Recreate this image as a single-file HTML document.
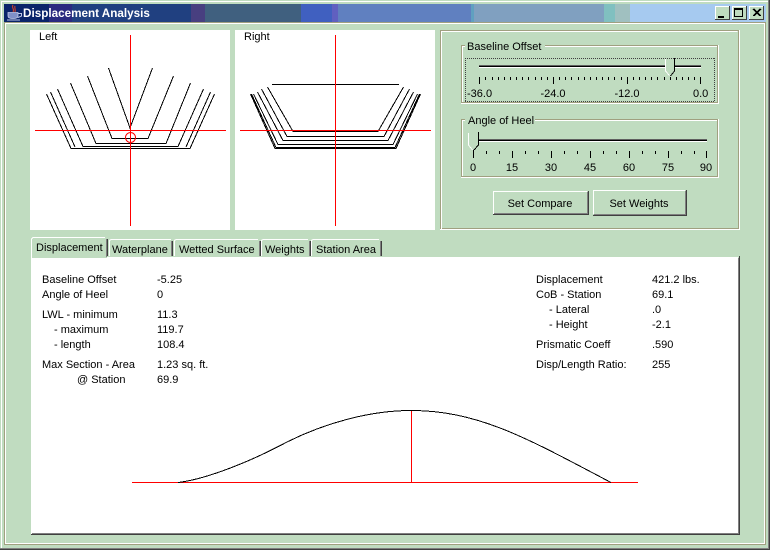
<!DOCTYPE html>
<html><head><meta charset="utf-8"><style>
html,body{margin:0;padding:0;width:770px;height:550px;overflow:hidden;background:#c0dcc0}
svg{display:block}
text{font-family:"Liberation Sans",sans-serif;font-size:11px;fill:#000}
.c{shape-rendering:crispEdges}
</style></head><body>
<svg width="770" height="550" viewBox="0 0 770 550" xmlns="http://www.w3.org/2000/svg">
<g class="c">
<rect width="770" height="550" fill="#c0dcc0"/>
<!-- window frame -->
<rect x="1" y="1" width="767" height="1" fill="#fff"/>
<rect x="1" y="1" width="1" height="547" fill="#fff"/>
<rect x="768" y="0" width="1" height="549" fill="#808080"/>
<rect x="769" y="0" width="1" height="550" fill="#404040"/>
<rect x="0" y="548" width="769" height="1" fill="#808080"/>
<rect x="0" y="549" width="770" height="1" fill="#404040"/>
<!-- title bar -->
<rect x="4" y="4" width="45" height="18" fill="#0a246a"/>
<rect x="49" y="4" width="23" height="18" fill="#2a2a80"/>
<rect x="72" y="4" width="60" height="18" fill="#1f3f80"/>
<rect x="132" y="4" width="59" height="18" fill="#204080"/>
<rect x="191" y="4" width="14" height="18" fill="#483f80"/>
<rect x="205" y="4" width="96" height="18" fill="#40607f"/>
<rect x="301" y="4" width="31" height="18" fill="#4060c0"/>
<rect x="332" y="4" width="6" height="18" fill="#6060c0"/>
<rect x="338" y="4" width="133" height="18" fill="#6080c0"/>
<rect x="471" y="4" width="3" height="18" fill="#60a0c0"/>
<rect x="474" y="4" width="130" height="18" fill="#80a0c0"/>
<rect x="604" y="4" width="11" height="18" fill="#80c0c0"/>
<rect x="615" y="4" width="15" height="18" fill="#a0c0c0"/>
<rect x="630" y="4" width="136" height="18" fill="#a6caf0"/>
<!-- inner frame -->
<rect x="4" y="22" width="762" height="1" fill="#a0a080"/>
<rect x="4" y="23" width="762" height="1" fill="#fff"/>
<rect x="4" y="22" width="1" height="523" fill="#a0a080"/>
<rect x="5" y="23" width="1" height="521" fill="#fff"/>
<rect x="764" y="24" width="1" height="520" fill="#fff"/>
<rect x="765" y="22" width="1" height="523" fill="#a0a080"/>
<rect x="5" y="543" width="760" height="1" fill="#fff"/>
<rect x="4" y="544" width="762" height="1" fill="#a0a080"/>
<!-- window buttons -->
<rect x="715" y="6" width="15" height="14" fill="#c0dcc0"/><path d="M715 6.5H729.5M715.5 6V20" stroke="#fff"/><path d="M715 19.5H730M729.5 6V20" stroke="#404040"/><rect x="718" y="16" width="6" height="2" fill="#000"/>
<rect x="732" y="6" width="15" height="14" fill="#c0dcc0"/><path d="M732 6.5H746.5M732.5 6V20" stroke="#fff"/><path d="M732 19.5H747M746.5 6V20" stroke="#404040"/><rect x="734.5" y="8.5" width="8" height="8" fill="none" stroke="#000"/><rect x="734" y="8" width="9" height="2" fill="#000"/>
<rect x="749" y="6" width="15" height="14" fill="#c0dcc0"/><path d="M749 6.5H763.5M749.5 6V20" stroke="#fff"/><path d="M749 19.5H764M763.5 6V20" stroke="#404040"/>
<path d="M753 9L760 16M754 9L761 16M760 9L753 16M761 9L754 16" stroke="#000" fill="none"/>
</g>
<!-- icon -->
<g>
<path d="M13 5C11 8 15 9 13 12M15 6C14 8 16 9 15 12" stroke="#c04030" stroke-width="1.2" fill="none"/>
<path d="M8 12.5H18V16C18 17.5 16 18.5 13 18.5C10 18.5 8 17.5 8 16Z" fill="#8090c8" stroke="#c0c8e8" stroke-width=".8"/>
<path d="M18 13.5H21.5V16L18 17.5" fill="none" stroke="#c0c8e8" stroke-width="1"/>
<path d="M7 20H20" stroke="#c0c8e8" stroke-width="1"/>
</g>
<text x="23" y="17" style="font-size:11.7px;font-weight:bold;fill:#fff">Displacement Analysis</text>

<!-- plots -->
<g class="c">
<rect x="30" y="30" width="200" height="200" fill="#fff"/>
<rect x="235" y="30" width="200" height="200" fill="#fff"/>
<g fill="none" stroke="#000">
<path d="M46.5 94L71 148.5H190L214.5 94"/>
<path d="M50.5 92L75 147M210.5 92L186 147"/>
<path d="M57.5 89L83 146.5H178L203.5 89"/>
<path d="M70.5 83L96 143.5H166L190.5 83"/>
<path d="M87.5 76L112 138.5H148L173.5 76"/>
<path d="M108.5 68L130 128L152.5 68"/>
<path d="M272 84.5H399"/>
<path d="M250.5 94L275 148.5H396L420.5 94"/>
<path d="M251.5 94L276 147.5H395L419.5 94"/>
<path d="M253.5 94L278 144.5H393L417.5 94"/>
<path d="M257.5 92L283 140.5H388L413.5 92"/>
<path d="M261.5 89L287 136.5H384L409.5 89"/>
<path d="M267.5 87L293 131.5H378L403.5 87"/>
<path d="M293 130.5H378"/>
</g>
<g fill="none" stroke="#f00">
<path d="M130.5 35V226M35 130.5H226"/>
<path d="M335.5 35V226M240 130.5H431"/>
</g>
</g>
<circle cx="130.5" cy="137.5" r="5" fill="none" stroke="#f00"/>
<text x="39" y="40">Left</text>
<text x="244" y="40">Right</text>

<!-- controls panel -->
<g class="c" fill="none">
<path d="M440.5 30.5H738.5V228.5H440.5Z" stroke="#a0a080"/>
<path d="M441.5 229V31.5H737.5" stroke="#fff"/>
<path d="M739.5 30V229.5H440" stroke="#fff"/>
<path d="M462 45.5H717.5V102.5H461.5V45" stroke="#a0a080"/>
<path d="M462 46.5H717M718.5 45V103.5H461M462.5 46V102" stroke="#fff"/>
<path d="M462 119.5H717.5V176.5H461.5V119" stroke="#a0a080"/>
<path d="M462 120.5H717M718.5 119V177.5H461M462.5 120V176" stroke="#fff"/>
<path d="M465 58.5H715M465 101.5H715M465.5 58V102M714.5 58V102" stroke="#404040" stroke-dasharray="1 1"/>
</g>
<g class="c">
<rect x="465" y="42" width="80" height="8" fill="#c0dcc0"/>
<rect x="465" y="116" width="70" height="8" fill="#c0dcc0"/>
<!-- baseline slider -->
<rect x="479" y="65" width="222" height="1" fill="#606060"/>
<rect x="479" y="66" width="222" height="1" fill="#000"/>
<rect x="479" y="67" width="222" height="1" fill="#fff"/>
<path d="M665.5 59H674.5V71L670 76L665.5 71Z" fill="#c0dcc0"/>
<path d="M665.5 59V71L669.5 75.5" fill="none" stroke="#fff"/>
<path d="M674.5 58V71L670.5 76" fill="none" stroke="#000"/>
<path fill="none" stroke="#000" d="M485.5 77V80M492.5 77V80M498.5 77V80M504.5 77V80M510.5 77V80M516.5 77V80M522.5 77V80M528.5 77V80M535.5 77V80M541.5 77V80M547.5 77V80M559.5 77V80M565.5 77V80M571.5 77V80M578.5 77V80M584.5 77V80M590.5 77V80M596.5 77V80M602.5 77V80M608.5 77V80M614.5 77V80M621.5 77V80M633.5 77V80M639.5 77V80M645.5 77V80M651.5 77V80M657.5 77V80M664.5 77V80M670.5 77V80M676.5 77V80M682.5 77V80M688.5 77V80M694.5 77V80M479.5 77V84M553.5 77V84M627.5 77V84M700.5 77V84"/>
<!-- heel slider -->
<rect x="478" y="139" width="229" height="1" fill="#606060"/>
<rect x="478" y="140" width="229" height="1" fill="#000"/>
<rect x="478" y="141" width="229" height="1" fill="#fff"/>
<path d="M468.5 133H477.5V145L473 150L468.5 145Z" fill="#c0dcc0"/>
<path d="M468.5 133V145L472.5 150" fill="none" stroke="#fff"/>
<path d="M478.5 132V145L474 150" fill="none" stroke="#000"/>
<path fill="none" stroke="#000" d="M486.5 151V154M499.5 151V154M525.5 151V154M538.5 151V154M564.5 151V154M577.5 151V154M603.5 151V154M616.5 151V154M642.5 151V154M655.5 151V154M681.5 151V154M694.5 151V154M473.5 150V158M512.5 151V158M551.5 151V158M590.5 151V158M629.5 151V158M668.5 151V158M706.5 151V158"/>
<!-- buttons -->
<path d="M493.5 214V191.5H587" fill="none" stroke="#fff"/>
<path d="M494 213.5H587.5V192" fill="none" stroke="#808080"/>
<path d="M493 214.5H588.5V191" fill="none" stroke="#404040"/>
<path d="M593.5 214V190.5H685" fill="none" stroke="#fff"/>
<path d="M594 214.5H685.5V191" fill="none" stroke="#808080"/>
<path d="M593 215.5H686.5V190" fill="none" stroke="#404040"/>
</g>
<text x="467" y="50">Baseline Offset</text>
<text x="468" y="124">Angle of Heel</text>
<text x="467" y="97">-36.0</text>
<text x="553" y="97" text-anchor="middle">-24.0</text>
<text x="627" y="97" text-anchor="middle">-12.0</text>
<text x="693" y="97">0.0</text>
<g text-anchor="middle">
<text x="473" y="171">0</text><text x="512" y="171">15</text><text x="551" y="171">30</text><text x="590" y="171">45</text><text x="629" y="171">60</text><text x="668" y="171">75</text><text x="706" y="171">90</text>
<text x="540" y="207">Set Compare</text>
<text x="639" y="207">Set Weights</text>
</g>

<!-- tabs -->
<g class="c">
<rect x="32" y="257" width="706" height="276" fill="#fff"/>
<path d="M31.5 534V257.5H738" fill="none" stroke="#fff"/>
<path d="M32 533.5H738.5V258" fill="none" stroke="#808080"/>
<path d="M31 534.5H739.5V256" fill="none" stroke="#404040"/>
<rect x="32" y="238" width="75" height="20" fill="#c0dcc0"/>
<path d="M31.5 258V239L33 237.5H105" fill="none" stroke="#fff"/>
<path d="M107.5 239V256" fill="none" stroke="#404040"/><path d="M106.5 239V257" fill="none" stroke="#808080"/>
<path d="M109.5 256V240.5L111 239.5H171" fill="none" stroke="#fff"/><path d="M172.5 241V256" fill="none" stroke="#404040"/><path d="M171.5 241V256" fill="none" stroke="#808080"/>
<path d="M174.5 256V240.5L176 239.5H258" fill="none" stroke="#fff"/><path d="M260.5 241V256" fill="none" stroke="#404040"/><path d="M259.5 241V256" fill="none" stroke="#808080"/>
<path d="M261.5 256V240.5L263 239.5H308" fill="none" stroke="#fff"/><path d="M310.5 241V256" fill="none" stroke="#404040"/><path d="M309.5 241V256" fill="none" stroke="#808080"/>
<path d="M311.5 256V240.5L313 239.5H379" fill="none" stroke="#fff"/><path d="M381.5 241V256" fill="none" stroke="#404040"/><path d="M380.5 241V256" fill="none" stroke="#808080"/>
</g>
<text x="36" y="251">Displacement</text>
<text x="112" y="253">Waterplane</text>
<text x="179" y="253">Wetted Surface</text>
<text x="265" y="253">Weights</text>
<text x="316" y="253">Station Area</text>

<!-- data -->
<text x="42" y="283">Baseline Offset</text><text x="157" y="283">-5.25</text>
<text x="42" y="298">Angle of Heel</text><text x="157" y="298">0</text>
<text x="42" y="318">LWL - minimum</text><text x="157" y="318">11.3</text>
<text x="54" y="333">- maximum</text><text x="157" y="333">119.7</text>
<text x="54" y="348">- length</text><text x="157" y="348">108.4</text>
<text x="42" y="368">Max Section - Area</text><text x="157" y="368">1.23 sq. ft.</text>
<text x="77" y="383">@ Station</text><text x="157" y="383">69.9</text>
<text x="536" y="283">Displacement</text><text x="652" y="283">421.2 lbs.</text>
<text x="536" y="298">CoB - Station</text><text x="652" y="298">69.1</text>
<text x="549" y="313">- Lateral</text><text x="652" y="313">.0</text>
<text x="549" y="328">- Height</text><text x="652" y="328">-2.1</text>
<text x="536" y="348">Prismatic Coeff</text><text x="652" y="348">.590</text>
<text x="536" y="368">Disp/Length Ratio:</text><text x="652" y="368">255</text>

<!-- curve -->
<g class="c" fill="none">
<path d="M132 482.5H638M411.5 410V482" stroke="#f00"/>
<path d="M178 482.5C200 480 240 467 287 442C325 423 370 410.5 411 410.5C480 410.5 530 440 611 482.5" stroke="#000"/>
</g>
</svg>
</body></html>
